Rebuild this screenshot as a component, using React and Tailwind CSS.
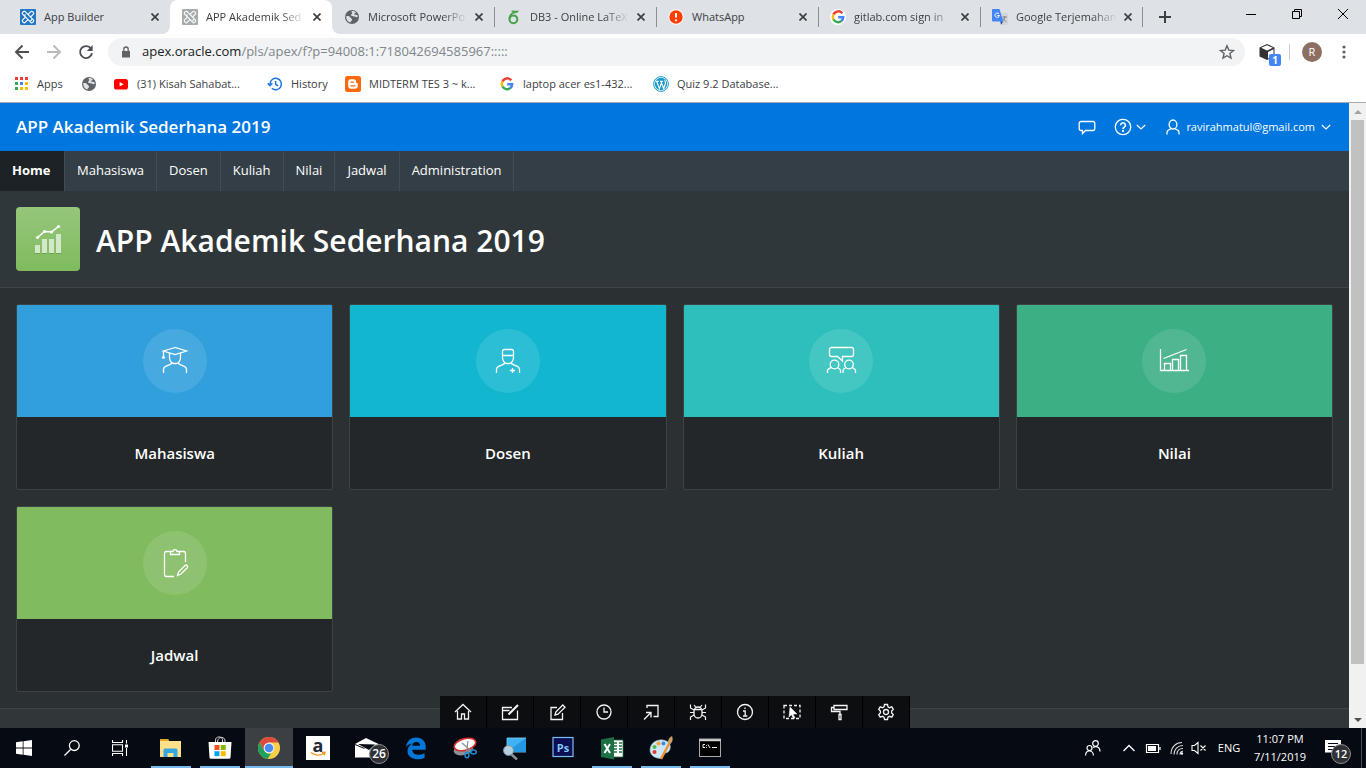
import React from "react";

const Svg = ({ box = "0 0 16 16", className = "size-4", children, ...rest }) => (
  <svg viewBox={box} className={`shrink-0 ${className}`} fill="none" aria-hidden="true" {...rest}>
    {children}
  </svg>
);

/* ---------- favicons ---------- */

const ApexIcon = ({ color }) => (
  <Svg>
    <rect width="16" height="16" rx="1" fill={color} />
    <g stroke="#fff" strokeWidth="1.1" fill={color}>
      <rect x="6.200" y="1" width="3.600" height="14" rx="1.200" transform="rotate(45 8 8)" />
      <rect x="6.200" y="1" width="3.600" height="14" rx="1.200" transform="rotate(-45 8 8)" />
      <path d="m4 7 1.500-1.500M10.500 12 12 10.500" />
    </g>
  </Svg>
);

const GlobeIcon = () => (
  <Svg>
    <circle cx="8" cy="8" r="7" fill="#5f6368" />
    <path d="M2.2 7.2c1.8-.6 3.600 0 4.400 1.600.4 1 1.600.8 1.500 2-.1 1-1.300 1.100-1.600 2.700C3.800 12.900 2 10.500 2.200 7.200ZM7.300 2.300c1.600-.5 3.500.1 4.600 1.200-.3 1-1.300.7-1.700 1.500-.3.800.9.900 2 .8 1 0 1.600.8 1.500 2-.8.9-1.900.3-2.900-.2-1.300-.6-2.800 0-3.500-.9-.8-1.100.6-1.600 1-2.500.2-.7-.9-1.100-1-1.900Z" fill="#dee1e6" />
  </Svg>
);

const OverleafIcon = () => (
  <Svg>
    <circle cx="7.400" cy="10.300" r="3.900" stroke="#46a247" strokeWidth="2" />
    <path d="M3.500 10C3.400 6.500 5.500 4 9 3" stroke="#46a247" strokeWidth="1.800" />
    <path d="M5 2C8 .5 10.500 2.600 13 1.200 12.500 3.600 10 4.200 8 4.600 8.300 4 9 3.600 9.800 3.200 8 3.200 6.200 3.200 5 2Z" fill="#46a247" />
  </Svg>
);

const AlertIcon = () => (
  <Svg>
    <circle cx="8" cy="8" r="7.700" fill="#fff" />
    <circle cx="8" cy="8" r="6.700" fill="#ff3d00" />
    <path d="M8 4v4.600" stroke="#fff" strokeWidth="2" />
    <circle cx="8" cy="11.300" r="1.100" fill="#fff" />
  </Svg>
);

const GoogleIcon = ({ disc }) => (
  <Svg>
    {disc && <circle cx="8" cy="8" r="8" fill="#fff" />}
    <g strokeWidth="2.500">
      <path d="M12.300 4.300A5.200 5.200 0 0 0 3.500 5.500" stroke="#ea4335" />
      <path d="M3.500 5.400A5.200 5.200 0 0 0 3.500 10.600" stroke="#fbbc05" />
      <path d="M3.500 10.500A5.200 5.200 0 0 0 11.500 11.900" stroke="#34a853" />
      <path d="M11.400 12A5.200 5.200 0 0 0 13.200 8.200H8.200" stroke="#4285f4" />
    </g>
  </Svg>
);

const TranslateIcon = () => (
  <Svg>
    <path d="M7 4h8a1 1 0 0 1 1 1v10a1 1 0 0 1-1 1H9.500Z" fill="#d3d5d8" />
    <path d="M10.500 8h4.500M12.700 7v1c0 2-1.200 3.500-2.500 4.200M11 9.200c.5 1.500 1.700 2.600 3.400 3.300" stroke="#7c868d" strokeWidth="1" />
    <path d="M1 0h6.500l3.800 12.500H1a1 1 0 0 1-1-1V1a1 1 0 0 1 1-1Z" fill="#4285f4" />
    <path d="M8.200 12.500h3.200L9 15.800Z" fill="#2a4fb3" />
    <path d="M7 4.900a2.200 2.200 0 1 0 .4 1.600H5.400" stroke="#fff" strokeWidth="1" />
  </Svg>
);

const AppsGrid = () => (
  <Svg>
    {["#ea4335", "#ea4335", "#ea4335", "#34a853", "#4285f4", "#fbbc05", "#34a853", "#fbbc05", "#fbbc05"].map((c, i) => (
      <rect key={i} x={2 + (i % 3) * 5} y={1 + Math.floor(i / 3) * 5} width="3" height="3" fill={c} />
    ))}
  </Svg>
);

const YoutubeIcon = () => (
  <Svg>
    <rect x="1" y="3" width="14" height="10.500" rx="2.600" fill="#f00" />
    <path d="M6.600 6v4.600l4-2.300Z" fill="#fff" />
  </Svg>
);

const HistoryIcon = () => (
  <Svg stroke="#1a73e8" strokeWidth="1.500">
    <path d="M3 8a5.700 5.700 0 1 1 1.800 4.200" />
    <path d="M.8 7.200 3 9.600l2.300-2.400M8.600 5v3.400l2.600 1.500" />
  </Svg>
);

const BloggerIcon = () => (
  <Svg>
    <rect width="16" height="16" rx="2.500" fill="#f96a0e" />
    <path d="M5.800 3.200h2.600c1.700 0 2.700 1 2.700 2.500 0 1 .3 1.200 1 1.300.5.100.7.300.7.900v2.200c0 1.600-1.100 2.700-2.700 2.700H5.900c-1.600 0-2.700-1.100-2.700-2.700V5.800c0-1.500 1-2.600 2.600-2.600Z" fill="#fff" />
    <path d="M6 6.200h2.400M6 9.900h4" stroke="#f96a0e" strokeWidth="1.300" strokeLinecap="round" />
  </Svg>
);

const WordpressIcon = () => (
  <Svg>
    <circle cx="8" cy="8" r="7.400" fill="#fff" stroke="#1a9bcb" strokeWidth="1" />
    <circle cx="8" cy="8" r="6.200" fill="#1a9bcb" />
    <path d="M2.600 5.400h3M7 5.400h3M3.800 5.600l2.600 7 1.600-4.800M8 5.600l2.600 7 1.900-5.400c.4-1.300-.6-1.900-.8-2.800" stroke="#fff" strokeWidth="1.200" />
  </Svg>
);

/* ---------- browser chrome ---------- */

const tabs = [
  { title: "App Builder", icon: <ApexIcon color="#2477c4" /> },
  { title: "APP Akademik Sed", icon: <ApexIcon color="#a6abae" />, active: true, fade: true },
  { title: "Microsoft PowerPo", icon: <GlobeIcon />, fade: true },
  { title: "DB3 - Online LaTeX", icon: <OverleafIcon />, sep: true, fade: true },
  { title: "WhatsApp", icon: <AlertIcon />, sep: true },
  { title: "gitlab.com sign in", icon: <GoogleIcon disc />, sep: true, fade: true },
  { title: "Google Terjemahan", icon: <TranslateIcon />, sep: true, fade: true },
];

const Tab = ({ title, icon, active, sep, fade }) => (
  <div className={`relative flex h-full w-[162px] items-center pl-3 pr-[7px] ${active ? "z-10 rounded-t-lg bg-white" : ""}`}>
    {sep && <span className="absolute left-0 top-[7px] h-5 w-px bg-[#8a8d91]" />}
    {active && (
      <>
        <Svg box="0 0 8 8" className="absolute -left-2 bottom-0 size-2"><path d="M8 0v8H0A8 8 0 0 0 8 0Z" fill="#fff" /></Svg>
        <Svg box="0 0 8 8" className="absolute -right-2 bottom-0 size-2"><path d="M0 0v8h8A8 8 0 0 1 0 0Z" fill="#fff" /></Svg>
      </>
    )}
    {icon}
    <a
      href="#tab"
      className={`ml-2 flex-1 whitespace-nowrap text-[11px] text-[#3c4043] ${fade ? "[mask-image:linear-gradient(to_right,black_75%,transparent)]" : ""}`}
    >
      {title}
    </a>
    <button aria-label={`Close ${title}`} className="ml-1 flex size-4 items-center justify-center">
      <Svg box="0 0 8 8" className="size-2" stroke="#3c4043" strokeWidth="1.700"><path d="m.5.5 7 7m0-7-7 7" /></Svg>
    </button>
  </div>
);

const TabStrip = () => (
  <div className="flex h-[34px] shrink-0 bg-[#dee1e6] pl-2">
    {tabs.map((t) => <Tab key={t.title} {...t} />)}
    <div className="flex items-center">
      <span className="h-5 w-px bg-[#8a8d91]" />
      <button aria-label="New tab" className="ml-4 flex size-3 items-center justify-center">
        <Svg box="0 0 12 12" className="size-3" stroke="#3c4043" strokeWidth="2"><path d="M6 0v12M0 6h12" /></Svg>
      </button>
    </div>
    <div className="ml-auto flex h-7 items-center">
      <button aria-label="Minimize" className="flex w-[46px] justify-center">
        <Svg box="0 0 10 10" className="size-2.5" stroke="#000"><path d="M0 5.500h10" /></Svg>
      </button>
      <button aria-label="Restore" className="flex w-[46px] justify-center">
        <Svg box="0 0 10 10" className="size-2.5" stroke="#000"><path d="M.5 2.500h7v7h-7zM2.500 2.500v-2h7v7h-2" /></Svg>
      </button>
      <button aria-label="Close" className="flex w-[46px] justify-center">
        <Svg box="0 0 10 10" className="size-2.5" stroke="#000"><path d="m0 0 10 10m0-10L0 10" /></Svg>
      </button>
    </div>
  </div>
);

const AddressBar = () => (
  <div className="flex h-9 shrink-0 items-center bg-white pl-3.5">
    <button aria-label="Back"><Svg stroke="#4b4f53" strokeWidth="1.900"><path d="M15 8H2m6.500-6.500L2 8l6.500 6.500" /></Svg></button>
    <button aria-label="Forward" className="ml-4"><Svg stroke="#bababa" strokeWidth="1.900"><path d="M1 8h13M7.500 1.500 14 8l-6.500 6.500" /></Svg></button>
    <button aria-label="Reload" className="ml-4">
      <Svg><path d="M13 4.600A6 6 0 1 0 14 9.300" stroke="#4b4f53" strokeWidth="1.900" /><path d="M14.600 1v6H8.800Z" fill="#4b4f53" /></Svg>
    </button>
    <div className="ml-3.5 flex h-7 min-w-0 flex-1 items-center rounded-full bg-[#f1f3f4] pl-3 pr-2.5">
      <Svg box="0 0 12 12" className="size-3">
        <path d="M2 5h8v6.500H2z" fill="#5f6368" />
        <path d="M3.800 5V3.200a2.200 2.200 0 0 1 4.400 0V5" stroke="#5f6368" strokeWidth="1.300" />
      </Svg>
      <div className="ml-2.5 flex-1 overflow-hidden whitespace-nowrap text-[13px] text-[#80868b]">
        <span className="text-[#202124]">apex.oracle.com</span>/pls/apex/f?p=94008:1:718042694585967:::::
      </div>
      <button aria-label="Bookmark">
        <Svg stroke="#5f6368" strokeWidth="1.400"><path d="m8 1.800 1.800 4.300 4.700.4-3.600 3 1.100 4.600L8 11.700l-4 2.400 1.100-4.600-3.600-3 4.700-.4Z" /></Svg>
      </button>
    </div>
    <button aria-label="Extension" className="relative ml-3.5">
      <Svg className="size-4">
        <path d="M8 0 15.500 3.500v9L8 16 .5 12.500v-9Z" fill="#333" />
        <path d="M8 1.200 13.800 3.800 8 6.500 2.200 3.800Z" fill="#fff" />
        <path d="M9 8 14.500 5.300v6.500L9 14.500Z" fill="#fff" />
      </Svg>
      <span className="absolute -bottom-1.5 -right-1.5 flex size-3 items-center justify-center rounded-xs bg-[#4285f4] text-[10px] font-bold text-white">1</span>
    </button>
    <span className="ml-3.5 h-4 w-px bg-[#c8cacd]" />
    <button className="ml-3 flex size-5 items-center justify-center rounded-full bg-[#8d6e63] text-[11px] text-white">R</button>
    <button aria-label="Menu" className="ml-3.5 mr-3.5"><Svg><g fill="#5f6368"><circle cx="8" cy="3" r="1.600" /><circle cx="8" cy="8" r="1.600" /><circle cx="8" cy="13" r="1.600" /></g></Svg></button>
  </div>
);

const bookmarks = [
  { title: "Apps", icon: <AppsGrid />, w: "w-[68px]" },
  { title: "", icon: <GlobeIcon />, w: "w-8" },
  { title: "(31) Kisah Sahabat...", icon: <YoutubeIcon />, w: "w-[154px]" },
  { title: "History", icon: <HistoryIcon />, w: "w-[78px]" },
  { title: "MIDTERM TES 3 ~ k...", icon: <BloggerIcon />, w: "w-[154px]" },
  { title: "laptop acer es1-432...", icon: <GoogleIcon />, w: "w-[154px]" },
  { title: "Quiz 9.2 Database...", icon: <WordpressIcon />, w: "w-[154px]" },
];

const BookmarkBar = () => (
  <div className="flex h-[33px] shrink-0 items-center border-b border-[#a9a9a9] bg-white pl-[13px] pb-1">
    {bookmarks.map((b, i) => (
      <a key={i} href="#bookmark" aria-label={b.title || "Bookmark"} className={`flex items-center gap-2 whitespace-nowrap text-[11px] text-[#3c4043] ${b.w}`}>
        {b.icon}
        {b.title}
      </a>
    ))}
  </div>
);

/* ---------- application ---------- */

const Chevron = () => (
  <Svg box="0 0 10 10" className="size-2.5" stroke="#fff" strokeWidth="1.200"><path d="m.8 3 4.200 4 4.200-4" /></Svg>
);

const AppHeader = () => (
  <header className="flex h-12 items-center bg-[#0076df] px-4 text-white">
    <a href="#home" className="text-[17px] font-semibold">APP Akademik Sederhana 2019</a>
    <div className="ml-auto flex items-center pr-0.5">
      <button aria-label="Feedback">
        <Svg box="0 0 18 16" className="h-4 w-[18px]" stroke="#fff" strokeWidth="1.300">
          <path d="M3 2.500h12a1.800 1.800 0 0 1 1.800 1.800v5.400a1.800 1.800 0 0 1-1.800 1.800H7.500l-3 3v-3H3a1.800 1.800 0 0 1-1.800-1.800V4.300A1.800 1.800 0 0 1 3 2.500Z" />
        </Svg>
      </button>
      <button aria-label="Help" className="ml-[18px] flex items-center gap-1">
        <Svg box="0 0 18 18" className="size-[18px]" stroke="#fff" strokeWidth="1.300">
          <circle cx="9" cy="9" r="7.700" />
          <path d="M6.600 7.200a2.400 2.400 0 1 1 3.600 2.100c-.8.500-1.200.9-1.200 1.700" strokeWidth="1.600" />
          <circle cx="9" cy="13" r=".5" />
        </Svg>
        <Chevron />
      </button>
      <button className="ml-5 flex items-center gap-1.5 text-[11px] font-medium">
        <Svg box="0 0 14 16" className="h-4 w-3.5" stroke="#fff" strokeWidth="1.300">
          <ellipse cx="7" cy="5.500" rx="3.900" ry="4.500" />
          <path d="M1 15.500v-2.600c0-1.400 1.200-1.700 4.300-3.400M13 15.500v-2.600c0-1.400-1.200-1.700-4.300-3.400" />
        </Svg>
        <span>ravirahmatul@gmail.com</span>
        <Chevron />
      </button>
    </div>
  </header>
);

const navItems = ["Home", "Mahasiswa", "Dosen", "Kuliah", "Nilai", "Jadwal", "Administration"];

const AppNav = () => (
  <nav className="flex h-10 bg-[#343e46]">
    {navItems.map((n, i) => (
      <a key={n} href={`#${n}`} className={`flex items-center border-r border-[#434c54] px-3 text-[13px] text-white ${i === 0 ? "min-w-[65px] bg-[#1d2226] font-bold" : "font-medium"}`}>
        {n}
      </a>
    ))}
  </nav>
);

const Hero = () => (
  <div className="flex items-center gap-4 border-b border-[#3e4448] bg-[#30373a] p-4">
    <div className="size-16 shrink-0 rounded-sm bg-linear-to-b from-[#95c67a] to-[#80bb5e]">
      <Svg box="0 0 64 64" className="size-16">
        <path d="M19 46v-8h5v8zM26 46V32h5v14zM33 46V32h5v14zM40 46V27h5v19z" fill="#d3e8c9" />
        <path d="M19 46.500h5m2 0h5m2 0h5m2 0h5" stroke="#6fa351" />
        <path d="m21.500 30.500 7-6 7 .5 7-5.500" stroke="#fff" strokeWidth="1.500" />
        <g fill="#fff"><circle cx="21.500" cy="30.500" r="1.600" /><circle cx="28.500" cy="24.500" r="1.600" /><circle cx="35.500" cy="25" r="1.600" /><circle cx="42.500" cy="19.500" r="1.600" /></g>
      </Svg>
    </div>
    <h1 className="pt-1 text-[30px] leading-10 font-semibold text-white">APP Akademik Sederhana 2019</h1>
  </div>
);

const shoulders = "M4.500 28v-3.500c0-2 .8-2.600 2.200-3.200l4-1.600c1.200-.5 1.800-1 2.300-1.700M27.500 28v-3.500c0-2-.8-2.600-2.200-3.200l-4-1.600c-1.200-.5-1.800-1-2.300-1.700";

const cards = [
  {
    title: "Mahasiswa",
    color: "bg-[#309fdb]",
    icon: (
      <>
        <path d="M16 2.500 4.500 6 16 9.500 27.500 6Z" />
        <path d="M4.500 6v6M10.500 8v4.500c0 3.500 2.500 6 4.300 6h2.400c1.800 0 4.300-2.500 4.300-6V8" />
        <path d="M3 13.300 4 11h1l1 2.300Z" fill="#fff" strokeWidth=".5" />
        <path d={shoulders} />
      </>
    ),
  },
  {
    title: "Dosen",
    color: "bg-[#13b6cf]",
    icon: (
      <>
        <path d="M12.500 4.500h7a2 2 0 0 1 2 2v6c0 3.500-2.500 6-4.300 6h-2.400c-1.800 0-4.300-2.500-4.300-6v-6a2 2 0 0 1 2-2ZM10.500 10.500h11" />
        <path d={shoulders} />
        <path d="M20.500 23v5M18 25.500h5" />
      </>
    ),
  },
  {
    title: "Kuliah",
    color: "bg-[#2ebfbc]",
    icon: (
      <>
        <path d="M6.500 2.500h20a2 2 0 0 1 2 2v5a2 2 0 0 1-2 2H17.500v4.500l-5-4.500H6.500a2 2 0 0 1-2-2V4.500a2 2 0 0 1 2-2Z" />
        <circle cx="9.500" cy="19.500" r="4.300" />
        <circle cx="24" cy="19.500" r="4.300" />
        <path d="M2.500 28v-2.500c0-1.500 1.500-2 4-3M15.500 28v-2.500c0-1.500-1-2-3-3M18 28v-2.500c0-1.500 1-2 3-3M30.500 28v-2.500c0-1.500-1-2-3.500-3" />
      </>
    ),
  },
  {
    title: "Nilai",
    color: "bg-[#3caf85]",
    icon: (
      <>
        <path d="M2.500 4v21.500H31M5.500 13.500l23-9" />
        <path d="M6.500 25.500v-7h6v7M14.500 25.500v-11h6v11M22.500 25.500v-15h6v15" />
      </>
    ),
  },
  {
    title: "Jadwal",
    color: "bg-[#81bb5f]",
    icon: (
      <>
        <path d="M11.500 4.500h-4a2 2 0 0 0-2 2v21a2 2 0 0 0 2 2H15M20.500 4.500h4a2 2 0 0 1 2 2V15" />
        <path d="M11.500 7.500v-3H14c0-2.500 4-2.500 4 0h2.500v3Z" />
        <path d="m18.500 28.500 1-3.500 6.500-6.500c1.500-1.300 3.500.7 2.300 2.200L21.700 27.300Z" />
      </>
    ),
  },
];

const Card = ({ title, color, icon }) => (
  <a href={`#${title}`} className="block overflow-hidden rounded-xs border border-[#3d4245] bg-[#232729]">
    <div className={`flex h-28 items-center justify-center ${color}`}>
      <div className="flex size-16 items-center justify-center rounded-full bg-white/11">
        <Svg box="0 0 32 32" className="size-8" stroke="#fff" strokeWidth="1.300">{icon}</Svg>
      </div>
    </div>
    <h3 className="flex h-[72px] items-center justify-center text-[15px] font-semibold text-white">{title}</h3>
  </a>
);

/* ---------- developer toolbar ---------- */

const devTools = [
  ["Home", <><path d="M1 9 9 1.500 17 9" /><path d="M3.500 8v8h4v-5h3v5h4V8" /></>],
  ["Application", <><path d="M11 4.500H1.500v12h15v-9M1.500 7.500h7" /><path d="M7.500 11.500 17 2" strokeWidth="2.200" /></>],
  ["Edit Page", <><path d="M9 4.500H3v12h11.500V10" /><path d="m7 12 .8-3 7-7 2.200 2.200-7 7Z" /></>],
  ["Session", <><circle cx="9" cy="9" r="7" /><path d="M9 4.500V9h4" /></>],
  ["View Debug", <><path d="M5 5V2.500h11v11h-4.500" /><path d="M2 16.500 9 9.500M4 9.500h5v5" /></>],
  ["Debug", <><path d="M5 8a4 4 0 0 1 8 0v3a4 4 0 0 1-8 0ZM5.500 6.500h7" /><path d="M1.500 1.500V5L5 7M16.500 1.500V5L13 7M1 9.500h4M17 9.500h-4M1.500 17v-3L5 12M16.500 17v-3L13 12M7 4.500 5 2M11 4.500 13 2" strokeWidth="1.200" /></>],
  ["Info", <><circle cx="9" cy="9" r="7.500" /><path d="M7 8h2.200v5M7 13h4.300M9 4.500v1.600" /></>],
  ["Quick Edit", <><path d="M1 2.500h16v13H1Z" strokeDasharray="3 2" /><path d="m7 4 7 7h-4l2 4-1.500.7-2-4L6 14Z" fill="#fff" strokeWidth=".5" /></>],
  ["Theme Roller", <><path d="M4 2.500h13v4H4zM4 4.500H1.500v4H10v3M9 11.500h2v5H9z" /></>],
  ["Options", <><circle cx="9" cy="9" r="2.500" /><path d="M7.500 1.500h3l.5 2.300 1.500.9 2.300-.8 1.500 2.600-1.700 1.600v1.800l1.700 1.600-1.500 2.600-2.300-.8-1.500.9-.5 2.300h-3L7 14.200l-1.500-.9-2.300.8-1.500-2.600 1.700-1.600V8.100L1.700 6.500l1.500-2.600 2.300.8L7 3.800Z" /></>],
];

const DevToolbar = () => (
  <div className="absolute inset-x-0 bottom-0 flex h-8 justify-center">
    <div className="flex bg-[#0b0d0f]/95">
      {devTools.map(([name, icon]) => (
        <button key={name} aria-label={name} className="flex w-[47px] items-center justify-center border-r border-black">
          <Svg box="0 0 18 18" className="size-[18px]" stroke="#f4f4f4" strokeWidth="1.300">{icon}</Svg>
        </button>
      ))}
    </div>
  </div>
);

const Scrollbar = () => (
  <div className="flex w-[17px] shrink-0 flex-col items-center bg-[#f1f1f1]" aria-hidden="true">
    <div className="flex h-[17px] items-center"><Svg box="0 0 8 4" className="h-1 w-2"><path d="M0 4 4 0l4 4Z" fill="#a3a3a3" /></Svg></div>
    <div className="w-[13px] flex-[544] bg-[#c1c1c1]" />
    <div className="flex-[47]" />
    <div className="flex h-[17px] items-center"><Svg box="0 0 8 4" className="h-1 w-2"><path d="m0 0 4 4 4-4Z" fill="#505050" /></Svg></div>
  </div>
);

/* ---------- taskbar ---------- */

const taskApps = [
  ["File Explorer", "narrow", <><path d="M1 3h8l1 2h12v16H1Z" fill="#ffe08a" /><path d="M1 3h8l1 2H1Z" fill="#e3a62b" /><path d="M4.500 21V14a1.500 1.500 0 0 1 1.500-1.500h11a1.500 1.500 0 0 1 1.500 1.500v7h-4v-4h-6v4Z" fill="#35a7e0" /></>],
  ["Microsoft Store", "narrow", <><path d="M7.500 6.500V4.200C7.500 0 14 0 14.500 3.500v3M9.500 6.500C9.500 0 17 0 17 5v1.500" stroke="#ddd" /><path d="M.5 6h23l-1 15.500a1.500 1.500 0 0 1-1.500 1.300H3a1.500 1.500 0 0 1-1.500-1.300Z" fill="#fff" /><path d="M6.500 9h5v5h-5z" fill="#f25022" /><path d="M12.700 9h5v5h-5z" fill="#7fba00" /><path d="M6.500 15.200h5v5h-5z" fill="#00a4ef" /><path d="M12.700 15.200h5v5h-5z" fill="#ffb900" /></>],
  ["Chrome", "full", <><circle cx="12" cy="12" r="11" fill="#f9cf4a" /><path d="M12 1a11 11 0 0 1 9.500 5.500H12L7.200 14.800 2.500 6.500A11 11 0 0 1 12 1Z" fill="#dd4b3e" /><path d="M2.500 6.500 7.300 14.800A5.500 5.500 0 0 0 14 17.200L10.700 23A11 11 0 0 1 2.500 6.500Z" fill="#1fa15d" /><circle cx="12" cy="12" r="5.400" fill="#f1f1f1" /><circle cx="12" cy="12" r="4.300" fill="#4a8af4" /></>],
  ["Amazon", "", <><rect width="24" height="24" fill="#fff" /><text x="12" y="15.500" textAnchor="middle" fontSize="18" fontWeight="700" fill="#222c38">a</text><path d="M5 16.500c4 3.400 9.500 3.400 13 .8M16 16.500l3-.3-.8 3" stroke="#f79a1c" strokeWidth="1.400" /></>],
  ["Mail", "", <><path d="M0 8 11 2l12.500 6v13.500H0Z" fill="#fff" /><path d="M3 8 20 8.500 14 14Z" fill="#070b12" /><path d="M0 8.500 9.500 12.500" stroke="#070b12" /></>],
  ["Edge", "", <path d="M2 11C3 4.500 7.200 1.500 12.200 1.500c6 0 9.600 4.200 9.600 9.700v2.500H8.200c.3 3.700 3.300 5 6.800 5 2.200 0 4-.6 5.600-1.500v4.500c-2 1-4.400 1.500-7 1.500C7 23.200 3.500 19.500 3.500 15c0-3.300 1.800-6 4.700-7.600C5.500 7.800 3.300 9.200 2 11Zm6.200-1.200h7.900c0-2.500-1.500-3.900-3.700-3.900-2.300 0-3.900 1.500-4.200 3.900Z" fill="#0078d7" />],
  ["Snipping Tool", "", <><ellipse cx="10.500" cy="13.500" rx="10" ry="5.500" fill="#8c9097" transform="rotate(-15 10.500 13.500)" /><ellipse cx="12" cy="8.500" rx="11" ry="5.800" fill="#fff" stroke="#d8322f" strokeWidth="1.600" transform="rotate(-15 12 8.500)" /><path d="m9 7 9 8M15 5l-1.500 11" stroke="#8a8f94" strokeWidth="1.200" /><ellipse cx="14" cy="19" rx="1.900" ry="2.800" stroke="#1e8fd5" strokeWidth="1.500" /><ellipse cx="20.500" cy="16" rx="2.800" ry="2" stroke="#1e8fd5" strokeWidth="1.500" /></>],
  ["Remote Viewer", "", <><path d="M5 2h19v14H5Z" fill="#3db2f5" stroke="#8ad3fb" strokeWidth=".8" /><path d="M5 16 24 2v14Z" fill="#2497e0" /><path d="m9 18 6 5.500" stroke="#8a9096" strokeWidth="2.500" /><circle cx="6.500" cy="14.500" r="5" fill="#b6cfdc" stroke="#6f93a8" /></>],
  ["Photoshop", "", <><rect x="2" y="1.500" width="20" height="19" fill="#0b0e52" stroke="#7dbdf5" strokeWidth="1.200" /><text x="12" y="15.500" textAnchor="middle" fontSize="11" fontWeight="700" fill="#84c5fb">Ps</text></>],
  ["Excel", "narrow", <><path d="M12 4h11v17H12Z" fill="#fff" stroke="#207245" strokeWidth=".8" /><path d="M14 7h3M19 7h3M14 10h3M19 10h3M14 13h3M19 13h3M14 16h3M19 16h3" stroke="#207245" strokeWidth="1.600" /><path d="m1 3.500 13-2.500v22.500L1 21Z" fill="#1d7044" /><path d="m4.500 8 5.500 9m0-9-5.500 9" stroke="#fff" strokeWidth="2" /></>],
  ["Paint", "narrow", <><path d="M1 14C1 7 8 3 14 4c7 1 9 7 6 11-2 3-5 1-6 4s-2 4-6 3-7-4-7-8Z" fill="#cfe6f5" stroke="#89aec6" strokeWidth=".6" /><circle cx="5.500" cy="11" r="2" fill="#55b947" /><circle cx="9.500" cy="7.500" r="2" fill="#f7a531" /><circle cx="14.500" cy="7.500" r="2" fill="#3a8de0" /><circle cx="5.500" cy="16" r="2" fill="#d83b32" /><path d="m12 23 9-17" stroke="#e8923a" strokeWidth="2.500" /><path d="M19 6c0-3 2-5 4-6 1 3 1 6-2 8Z" fill="#c9a06a" /></>],
  ["Command Prompt", "narrow", <><rect x="1.500" y="3" width="21" height="17.500" fill="#000" stroke="#a9a9a9" /><path d="M1.500 4.200h21" stroke="#d9d9d9" strokeWidth="2" /><path d="M7 8.500H5v3h2M8.500 9v.8m0 1.200v.8M10 8.500l2 3.500M14 11.500h5" stroke="#eee" /></>],
];

const TaskApp = ({ item }) => {
  const [name, state, icon] = item;
  return (
    <button aria-label={name} className={`relative mr-px flex h-10 w-12 items-center justify-center ${state === "full" ? "bg-[#3c3f43]" : ""}`}>
      <Svg box="0 0 24 24" className="size-6">{icon}</Svg>
      {name === "Mail" && (
        <span className="absolute bottom-1 right-0.5 flex size-5 items-center justify-center rounded-full border border-[#8b8d90] bg-[#303236] text-xs font-semibold text-white">26</span>
      )}
      {state !== "" && <span className={`absolute bottom-0 h-0.5 bg-[#76b9ed] ${state === "full" ? "w-12" : "w-10"}`} />}
    </button>
  );
};

const Taskbar = () => (
  <footer className="flex h-10 shrink-0 items-center bg-[#060a12] text-white">
    <button aria-label="Start" className="flex w-12 justify-center">
      <Svg><path d="M0 2.300 6.700 1.300v6.300H0ZM7.500 1.200 16 0v7.600H7.500ZM0 8.400h6.700v6.300L0 13.700ZM7.500 8.400H16V16l-8.500-1.200Z" fill="#fff" /></Svg>
    </button>
    <button aria-label="Search" className="flex w-12 justify-center">
      <Svg stroke="#fff" strokeWidth="1.300"><circle cx="10.300" cy="5.600" r="4.900" /><path d="M6.800 9.200.5 15.500" /></Svg>
    </button>
    <button aria-label="Task View" className="mr-[3px] flex w-12 justify-center">
      <Svg stroke="#fff" strokeWidth="1.100"><path d="M.5 0v2.500h10V0M.5 16v-2.500h10V16M.5 4.800h10v6.400H.5ZM14.500 0v3.500M14.500 8v8" /><path d="M13 4.500h3v3h-3z" fill="#fff" stroke="none" /></Svg>
    </button>
    {taskApps.map((a) => <TaskApp key={a[0]} item={a} />)}
    <div className="ml-auto flex h-10 items-center">
      <button aria-label="People">
        <Svg stroke="#fff" strokeWidth="1.200"><circle cx="10.500" cy="3.500" r="2.800" /><circle cx="4.500" cy="8" r="2.500" /><path d="M.6 15.500c0-6 7.800-6 7.800 0M8 7.500c3-2 7-.5 7 4" /></Svg>
      </button>
      <button aria-label="Show hidden icons" className="ml-[22px]">
        <Svg box="0 0 12 12" className="size-3" stroke="#fff" strokeWidth="1.300"><path d="m.5 9 5.500-5.500L11.500 9" /></Svg>
      </button>
      <Svg className="ml-2.5 size-4" stroke="#fff"><path d="M1.500 4.500h12v8h-12zM15 7v3" strokeWidth="1.200" /><path d="M3 6h8v5H3z" fill="#fff" stroke="none" /></Svg>
      <Svg className="ml-2 size-4" stroke="#ddd" strokeWidth="1.100">
        <path d="M2 14C2 7 7 2.500 13 2.500M5 14.500c0-5 3.500-9 9-9M8 14.500c0-3.500 2-6 6-6M11 14.500c0-2 1-3.200 3-3.200" />
        <circle cx="12.800" cy="13.500" r="1.300" fill="#fff" stroke="none" />
      </Svg>
      <Svg className="ml-1.5 size-4" stroke="#fff" strokeWidth="1.100"><path d="M1 5.500h2.500L7 2.500v11l-3.500-3H1ZM9.500 5.500l5 5m0-5-5 5" /></Svg>
      <span className="ml-2.5 w-6 text-center text-[11px]">ENG</span>
      <div className="ml-2 w-[62px] text-center text-[11px] leading-[18px] whitespace-nowrap">
        <div>11:07 PM</div>
        <div>7/11/2019</div>
      </div>
      <button aria-label="Notifications" className="relative ml-3.5 mr-3 w-6">
        <Svg><path d="M0 0h16v12.500h-5L8 16v-3.500H0Z" fill="#fff" /><path d="M3 3.500h10M3 6.500h10M3 9.500h7" stroke="#060a12" /></Svg>
        <span className="absolute -bottom-2 left-1.5 flex size-5 items-center justify-center rounded-full border border-[#8b8d90] bg-[#303236] text-[11px] font-semibold">12</span>
      </button>
      <span className="mr-1 h-10 w-px bg-[#4a4d52]" />
    </div>
  </footer>
);

export default function App() {
  return (
    <div className="flex h-screen flex-col overflow-hidden font-['Open_Sans','Noto_Sans',sans-serif]">
      <TabStrip />
      <AddressBar />
      <BookmarkBar />
      <div className="flex min-h-0 flex-1">
        <main className="relative flex min-w-0 flex-1 flex-col overflow-hidden bg-[#2b3033]">
          <AppHeader />
          <AppNav />
          <Hero />
          <section className="grid grid-cols-4 gap-4 p-4">
            {cards.map((c) => <Card key={c.title} {...c} />)}
          </section>
          <div className="min-h-5 flex-1 border-t border-[#3e4347] bg-[#313639]" />
          <DevToolbar />
        </main>
        <Scrollbar />
      </div>
      <Taskbar />
    </div>
  );
}
